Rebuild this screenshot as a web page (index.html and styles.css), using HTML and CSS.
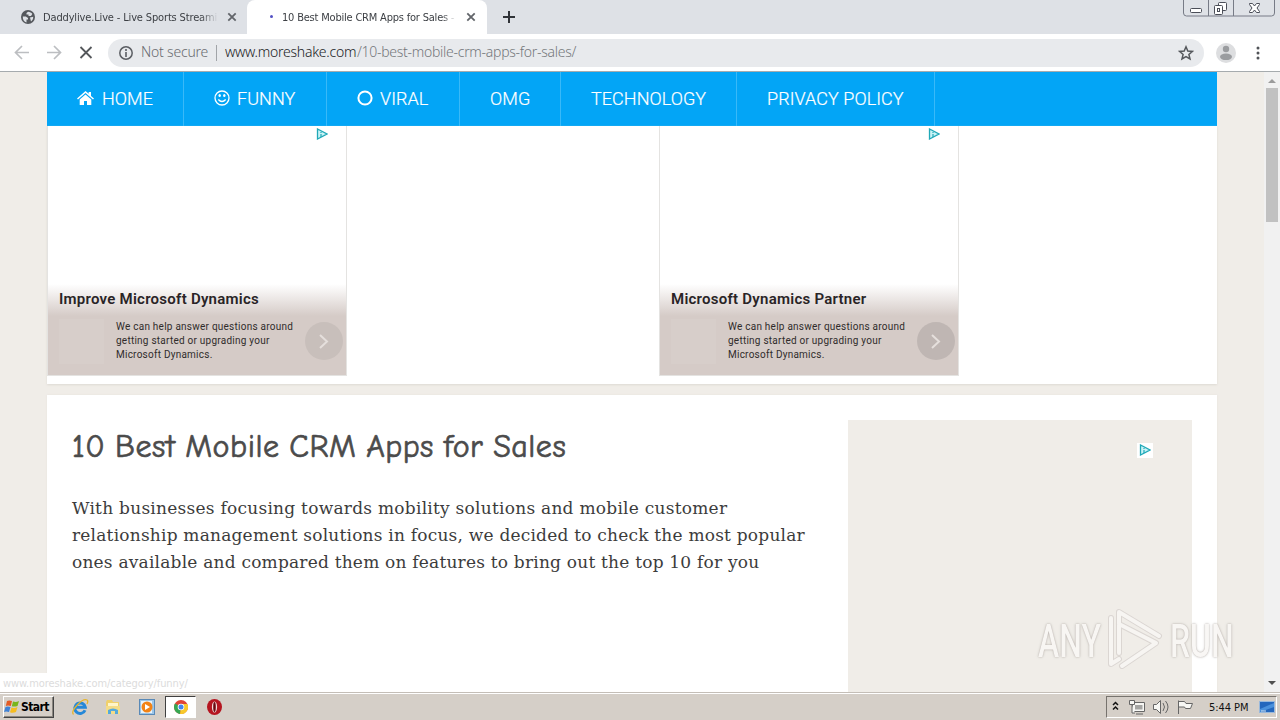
FILE: index.html
```
<!DOCTYPE html>
<html lang="en">
<head>
<meta charset="utf-8">
<title>10 Best Mobile CRM Apps for Sales</title>
<link rel="stylesheet" href="styles.css">
</head>
<body>
<svg class="defs" width="0" height="0">
  <symbol id="choice" viewBox="0 0 12 12"><path d="M1.500 1v10l9.500-5z" fill="#c9f3f6" stroke="#20a9b8" stroke-width="1.300"/><path d="M5 4v1M5 6v3" stroke="#20a9b8" stroke-width="1.200"/></symbol>
  <symbol id="close" viewBox="0 0 10 10"><path d="M1.300 1.300l7.400 7.400M8.700 1.300L1.300 8.700" stroke="#62656a" stroke-width="1.800"/></symbol>
</svg>
<div class="screen">
  <header class="tabs">
    <div class="tab idle">
      <svg width="14" height="14" viewBox="0 0 14 14"><circle cx="7" cy="7" r="7" fill="#55585d"/><path d="M1.800 6.500h3l2.200 1.500v1.500H5.500v3C3.200 12 1.600 9.800 1.800 6.500zM7 1.800c2 0 3.500 1 4.300 2.200L10 6H7.500V4.500H5.500V3zM9 7.500l3.200-.8c.2 2-.7 3.600-2.200 4.700z" fill="#dee1e6"/></svg>
      <span class="tab-title t1">Daddylive.Live - Live Sports Streami</span>
      <svg class="x" width="10" height="10"><use href="#close"/></svg>
    </div>
    <div class="tab active">
      <i class="spin"></i>
      <span class="tab-title t2">10 Best Mobile CRM Apps for Sales -</span>
      <svg class="x" width="10" height="10"><use href="#close"/></svg>
    </div>
    <svg class="plus" width="12" height="12"><path d="M6 0v12M0 6h12" stroke="#303338" stroke-width="2"/></svg>
    <svg class="winbtns" width="94" height="18" viewBox="0 0 94 18"><g fill="none" stroke="#777b86"><path d="M1.500 0v13q0 3 3 3h85q3 0 3-3V0M26.500 0v16M51.500 0v16" fill="#dfe2e7"/></g><g fill="#fff" stroke="#4b4e58"><rect x="8.500" y="8.500" width="11" height="4" rx="1"/><rect x="36.500" y="2.500" width="8" height="8" rx="1"/><rect x="32.500" y="5.500" width="8" height="9" rx="1"/><rect x="35.500" y="8.500" width="2" height="3"/><path d="M67.500 3.500h3l2 2.500 2-2.500h3v1l-2.500 3.500 2.500 3.500v1h-3l-2-2.500-2 2.500h-3v-1l2.500-3.500-2.500-3.500z"/></g></svg>
  </header>
  <div class="toolbar">
    <svg class="nav" width="96" height="38" viewBox="0 0 96 38"><g fill="none" stroke="#bcbec1" stroke-width="1.700"><path d="M29 18.500H16M22 12l-6.500 6.500 6.500 6.500"/><path d="M47 18.500h13M54 12l6.500 6.500-6.500 6.500"/></g><path d="M80.500 13l11 11M91.500 13l-11 11" stroke="#54575b" stroke-width="1.800"/></svg>
    <div class="omni">
      <svg width="14" height="14"><circle cx="7" cy="7" r="6.200" fill="none" stroke="#5b5e63" stroke-width="1.500"/><path d="M7 6v5M7 3v2" stroke="#5b5e63" stroke-width="1.600"/></svg>
      <span class="ns">Not secure</span><i class="sep"></i>
      <span class="host">www.moreshake.com</span><span class="path">/10-best-mobile-crm-apps-for-sales/</span>
      <svg class="star" width="16" height="16" viewBox="0 0 16 16"><path d="M8 1.800l1.800 4.200 4.600.4-3.500 3 1.100 4.500-4-2.400-4 2.400 1.100-4.500-3.500-3 4.600-.4z" fill="none" stroke="#55585c" stroke-width="1.500"/></svg>
    </div>
    <svg class="avatar" width="20" height="20"><circle cx="10" cy="10" r="10" fill="#dddee0"/><circle cx="10" cy="6" r="3.200" fill="#9a9c9f"/><ellipse cx="10" cy="13.800" rx="6" ry="3.300" fill="#9a9c9f"/></svg>
    <svg class="dots" width="4" height="14"><g fill="#505357"><circle cx="2" cy="2" r="1.500"/><circle cx="2" cy="7" r="1.500"/><circle cx="2" cy="12" r="1.500"/></g></svg>
  </div>
  <div class="viewport">
    <main class="site">
      <nav class="menu">
        <a class="m1"><svg width="17" height="14" viewBox="0 0 17 14"><path d="M0 7.500L8.500 0l3.200 2.800V1H14v3.900l3 2.600-1 1.100-7.500-6.500L1 8.600zM2.700 8.600l5.800-5 5.800 5V14H10v-4H7v4H2.700z" fill="#fff"/></svg><span>HOME</span></a>
        <a class="m2"><svg width="16" height="16"><g fill="none" stroke="#fff" stroke-width="1.300"><circle cx="8" cy="8" r="7"/><path d="M4.300 9.500q3.700 4 7.400 0"/></g><ellipse cx="5.700" cy="5.500" rx="1.200" ry="1.500" fill="#fff"/><ellipse cx="10.300" cy="5.500" rx="1.200" ry="1.500" fill="#fff"/></svg><span>FUNNY</span></a>
        <a class="m3"><svg width="16" height="16"><circle cx="8" cy="8" r="6.600" fill="none" stroke="#fff" stroke-width="2"/></svg><span>VIRAL</span></a>
        <a class="m4"><span>OMG</span></a>
        <a class="m5"><span>TECHNOLOGY</span></a>
        <a class="m6"><span>PRIVACY POLICY</span></a>
      </nav>
      <section class="ads">
        <article class="ad">
          <svg class="choice" width="12" height="12"><use href="#choice"/></svg>
          <h2>Improve Microsoft Dynamics</h2>
          <div class="ad-body"><i class="thumb"></i><p>We can help answer questions around<br>getting started or upgrading your<br>Microsoft Dynamics.</p><svg class="go" width="38" height="38"><circle cx="19" cy="19" r="19" fill="#c8bfbb"/><path d="M15 13l7 6.500-7 6.500" fill="none" stroke="#e5dfdc" stroke-width="2"/></svg></div>
        </article>
        <article class="ad">
          <svg class="choice" width="12" height="12"><use href="#choice"/></svg>
          <h2>Microsoft Dynamics Partner</h2>
          <div class="ad-body"><i class="thumb"></i><p>We can help answer questions around<br>getting started or upgrading your<br>Microsoft Dynamics.</p><svg class="go" width="38" height="38"><circle cx="19" cy="19" r="19" fill="#bfb6b3"/><path d="M15 13l7 6.500-7 6.500" fill="none" stroke="#e5dfdc" stroke-width="2"/></svg></div>
        </article>
      </section>
      <section class="post">
        <div class="article">
          <h1>10 Best Mobile CRM Apps for Sales</h1>
          <p><span class="l1">With businesses focusing towards mobility solutions and mobile customer</span><span class="l2">relationship management solutions in focus, we decided to check the most popular</span><span class="l3">ones available and compared them on features to bring out the top 10 for you</span></p>
        </div>
        <aside><div class="badge"><svg width="12" height="12"><use href="#choice"/></svg></div></aside>
      </section>
    </main>
    <div class="scroll"><svg width="16" height="16"><path d="M4 11h8L8 7z" fill="#9b9b9b"/></svg><i class="thumbbar"></i><svg class="down" width="16" height="16"><path d="M4 5h8L8 9z" fill="#505050"/></svg></div>
    <div class="status">www.moreshake.com/category/funny/</div>
    <div class="mark">
      <span>ANY</span>
      <svg width="58" height="66" viewBox="0 0 58 66"><g fill="none" stroke-linejoin="round" stroke-linecap="round"><path d="M13 46V5l40 24M13 17l37 19L16 59M5 11v46l8-5" stroke="#d9d4d0" stroke-width="6"/><path d="M13 46V5l40 24M13 17l37 19L16 59M5 11v46l8-5" stroke="#f8f6f4" stroke-width="4"/></g></svg>
      <span>RUN</span>
    </div>
  </div>
  <footer class="taskbar">
    <div class="start"><svg width="16" height="16" viewBox="0 0 16 16"><path d="M3 2q2-1 5 0L6.800 7q-3-1-5 0z" fill="#e35b25"/><path d="M9 2.500q3 1 6-.5l-1.500 5q-3 1-5.700.2z" fill="#79b51c"/><path d="M1.500 8q2-1 5 0L5 13q-3-1-5 0z" fill="#3f82d6"/><path d="M7.500 8.500q3 1 6-.5L12 13q-3 1.500-6 .3z" fill="#f6bd20"/></svg><span>Start</span></div>
    <svg class="ie" width="18" height="18" viewBox="0 0 18 18"><path d="M14 12.200A5.300 5.300 0 1 1 14.300 9.300H5" fill="none" stroke="#2588d8" stroke-width="3"/><path d="M2.500 16.500C-1 13 11 0 16 2q1.500 1 0 4" fill="none" stroke="#e6b52c" stroke-width="1.300"/></svg>
    <svg class="folder" width="16" height="16"><path d="M1 3l1-2h5l1 2h6v12H1z" fill="#f0d06b"/><path d="M3 4h10v4H3z" fill="#fff5c9"/><path d="M1 7h14v8H1z" fill="#f4dc88"/><path d="M3 15v-4q5-3 10 0v4h-3v-3H6v3z" fill="#54a9dc"/></svg>
    <svg class="wmp" width="16" height="16"><rect x=".5" y=".5" width="15" height="15" fill="#9bc6e9" stroke="#5989b7"/><rect x="2" y="2" width="11" height="12" fill="#e9f3fa"/><circle cx="8" cy="8" r="5.500" fill="#f28316"/><path d="M6 5v6l5-3z" fill="#fff"/></svg>
    <div class="chrome"><svg width="14" height="14"><circle cx="7" cy="7" r="7" fill="#e04436"/><path d="M7 7L1 3.500A7 7 0 0 0 6 14z" fill="#36a853"/><path d="M7 7l-1 7A7 7 0 0 0 13.300 4H7z" fill="#f8c92b"/><circle cx="7" cy="7" r="3.300" fill="#fff"/><circle cx="7" cy="7" r="2.500" fill="#4385ee"/></svg></div>
    <svg class="opera" width="15" height="16"><ellipse cx="7.500" cy="8" rx="7.500" ry="8" fill="#b51520"/><ellipse cx="7.500" cy="8" rx="2.600" ry="5.500" fill="#f3dddd"/><ellipse cx="7.500" cy="8" rx="1.300" ry="5" fill="#6b0810"/></svg>
    <div class="tray">
      <svg width="88" height="20" viewBox="0 0 88 20"><path d="M6 8l2.500-2.500L11 8M6 12.500L8.500 10l2.500 2.500" fill="none" stroke="#111" stroke-width="1.500"/><g fill="#f7f7f4" stroke="#666"><path d="M25.500 5.500h12v9h-12zM29 17h7"/><path d="M22.500 3.500h5v4h-5zM25 8v8h3"/><path d="M46.500 7.500h3l4-4v13l-4-4h-3z"/><path d="M56 6q3 4 0 8M58.500 4q5 6 0 12" fill="none"/><path d="M71.500 17V3.500M71.500 4.500h6l1.500 2h6.500l-2 5h-5l-1-1.500h-6"/></g><rect x="28" y="8" width="7.500" height="4.500" fill="#a5a5a3"/></svg>
      <span>5:44 PM</span>
      <svg width="16" height="14"><rect x=".5" y="1.500" width="15" height="11" fill="#2467bd" stroke="#9ab9dc"/><path d="M1 9l14-6v4L1 12z" fill="#4b91dc"/><path d="M2 11h5" stroke="#d8e8f4"/></svg>
    </div>
  </footer>
</div>
</body>
</html>
```
FILE: styles.css
```
* { box-sizing: border-box; }
body { margin: 0; font-family: "DejaVu Sans Condensed", "DejaVu Sans", sans-serif; }
svg { display: block; flex: none; }
.defs { position: absolute; }
h1, h2, p { margin: 0; }
.screen { width: 1280px; height: 720px; overflow: hidden; display: flex; flex-direction: column; background: #fff; }

.tabs { height: 34px; flex: none; display: flex; background: #dee1e6; }
.tab { height: 34px; display: flex; align-items: center; }
.idle { width: 247px; padding-left: 21px; }
.active { width: 240px; padding-left: 23px; background: #fff; border-radius: 8px 8px 0 0; }
.tab-title { white-space: nowrap; font-size: 11px; line-height: 18px; margin-top: 1px; color: #3d4045; letter-spacing: -.23px; }
.t1 { width: 175px; margin-left: 8px; letter-spacing: -.15px; -webkit-mask-image: linear-gradient(90deg, #000 90%, transparent); mask-image: linear-gradient(90deg, #000 90%, transparent); }
.t2 { width: 174px; margin-left: 9px; letter-spacing: -.2px; -webkit-mask-image: linear-gradient(90deg, #000 92%, transparent); mask-image: linear-gradient(90deg, #000 92%, transparent); }
.spin { width: 3px; height: 3px; margin-top: -2px; border-radius: 50%; background: #5350c4; }
.x { margin-left: 9px; }
.t2 + .x { margin-left: 10px; }
.plus { margin: 11px 0 0 16px; }
.winbtns { margin-left: auto; margin-right: 4px; }

.toolbar { height: 38px; flex: none; display: flex; align-items: center; background: #fff; border-bottom: 1px solid #a6abae; }
.nav { width: 96px; }
.omni { width: 1096px; height: 28px; margin-left: 12px; padding: 0 10px 0 11px; border-radius: 14px; background: #e8eaed; display: flex; align-items: center; font-family: "Noto Sans", sans-serif; font-size: 14px; line-height: 26px; font-weight: 300; white-space: nowrap; }
.ns, .host, .path { margin-top: -1px; }
.ns { width: 67px; margin-left: 8px; color: #686b70; letter-spacing: -.2px; }
.sep { width: 1px; height: 16px; margin: 0 8px; background: #a1a4a8; }
.host { width: 132px; color: #202124; letter-spacing: -.25px; }
.path { color: #74777b; letter-spacing: -.28px; }
.star { margin-left: auto; }
.avatar { margin-left: 12px; }
.dots { margin-left: 20px; }

.viewport { height: 620px; flex: none; display: flex; position: relative; overflow: hidden; background: #f0ede8; }
.site { width: 1170px; margin-left: 47px; }
.menu { height: 54px; display: flex; background: #03a5f6; }
.menu a { display: flex; align-items: center; gap: 8px; padding-left: 30px; border-right: 1px solid #39b9f8; color: #fff; font-family: Roboto, sans-serif; font-size: 18px; font-weight: 300; line-height: 24px; letter-spacing: .06px; white-space: nowrap; -webkit-text-stroke: .2px #fff; }
.menu a span { padding-bottom: 1px; }
.menu a svg { margin-top: -2px; }
.m2, .m3 { margin-left: 0; }
.menu .m2, .menu .m3 { gap: 7px; }
.m1 { width: 137px; }
.m2 { width: 143px; }
.m3 { width: 133px; }
.m4 { width: 101px; }
.m5 { width: 176px; }
.m6 { width: 198px; }
.ads { height: 258px; display: flex; gap: 312px; background: #fff; box-shadow: 0 1px 2px #dedad4; }
.ad { width: 300px; height: 250px; border: 1px solid #e4e3e1; border-top: 0; position: relative; padding-top: 159px; background: linear-gradient(#fff 158px, #d5cbc7 190px); font-family: Roboto, sans-serif; }
.choice { position: absolute; top: 2px; right: 18px; }
.ad h2 { height: 30px; padding-left: 11px; font-size: 15px; line-height: 28px; font-weight: 600; color: #292426; letter-spacing: .25px; white-space: nowrap; }
.ad-body { display: flex; align-items: flex-start; }
.thumb { width: 45px; height: 45px; margin: 4px 0 0 11px; background: #d7ceca; }
.ad-body p { width: 189px; margin: 5px 0 0 12px; font-size: 10px; line-height: 14px; color: #302b2b; letter-spacing: .24px; white-space: nowrap; }
.go { margin-top: 7px; }
.post { height: 297px; margin-top: 11px; padding: 25px 25px 0; background: #fff; display: flex; box-shadow: 0 0 2px #e6e2dd; }
.article { width: 776px; }
h1 { height: 54px; font-family: "Comic Sans MS", "Comic Neue", Lato, sans-serif; font-size: 32px; line-height: 54px; font-weight: 400; color: #4b4b4b; letter-spacing: .5px; word-spacing: -1.3px; white-space: nowrap; -webkit-text-stroke: .7px #4b4b4b; }
.article p { margin-top: 21px; font-family: "DejaVu Serif", serif; font-size: 17px; line-height: 27px; color: #3c3c3c; letter-spacing: .21px; }
.article p span { display: block; white-space: nowrap; }
.article .l1 { letter-spacing: .25px; }
aside { width: 344px; height: 272px; padding: 23px 0 0 289px; background: #f0ede8; }
.badge { width: 16px; height: 15px; padding: 1px 2px; background: #fff; }
.scroll { width: 16px; margin-left: auto; background: #f1f1f1; display: flex; flex-direction: column; }
.thumbbar { width: 12px; height: 134px; margin-left: 2px; background: #c1c1c1; }
.down { margin-top: auto; }
.status { position: absolute; left: 0; bottom: 0; width: 191px; height: 19px; padding-left: 3px; background: #fff; color: #dcdcdc; font-size: 11px; line-height: 21px; letter-spacing: -.07px; white-space: nowrap; }
.mark { position: absolute; left: 1038px; top: 535px; height: 66px; display: flex; align-items: center; opacity: .9; }
.mark span { width: 66px; font-family: Roboto, sans-serif; font-size: 47px; font-weight: 500; color: #f9f7f5; text-shadow: 0 0 3px #aaa39e, 0 0 1px #c8c2bd; transform: scaleX(.68); transform-origin: left; }
.mark svg { margin: 0 6px 0 2px; }

.taskbar { height: 28px; flex: none; padding: 1px 3px 0; background: #d5cfc8; border-top: 1px solid #c4beb7; box-shadow: inset 0 1px #fff; display: flex; align-items: center; }
.start { width: 51px; height: 22px; display: flex; align-items: center; gap: 1px; border: 1px solid; border-color: #fff #444 #444 #fff; box-shadow: inset -1px -1px #8b8780; font-size: 12px; font-weight: 700; letter-spacing: -.6px; }
.ie { margin-left: 17px; }
.folder { margin-left: 16px; }
.wmp { margin-left: 18px; }
.chrome { width: 31px; height: 22px; margin-left: 10px; display: flex; align-items: center; justify-content: center; background: #fff; border: 1px solid; border-color: #404040 #fff #fff #404040; }
.opera { margin-left: 11px; }
.tray { width: 171px; height: 22px; margin-left: auto; display: flex; align-items: center; border: 1px solid; border-color: #77736e #fff #fff #77736e; font-size: 11px; letter-spacing: -.05px; color: #111; }
.tray span { width: 50px; margin-left: 14px; white-space: nowrap; }
```
